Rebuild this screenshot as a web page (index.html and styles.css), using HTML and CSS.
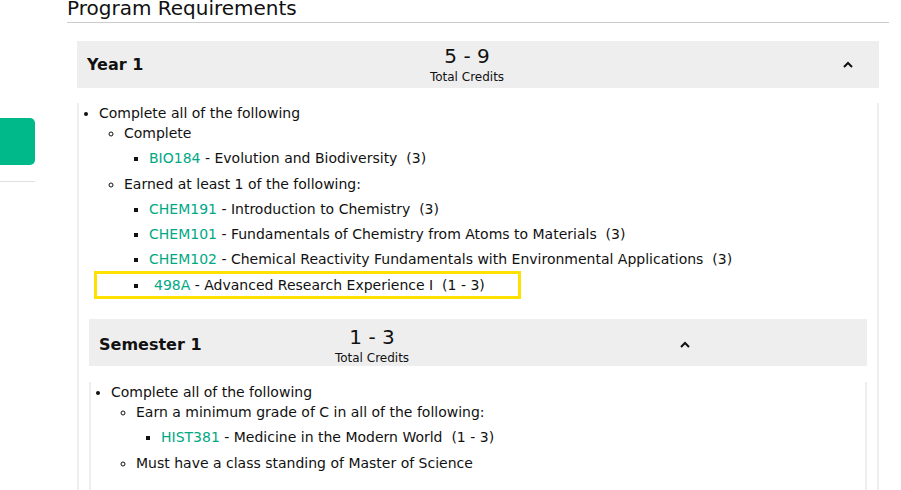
FILE: index.html
```html
<!DOCTYPE html>
<html lang="en">
  <head>
    <meta charset="UTF-8" />
    <meta name="viewport" content="width=device-width, initial-scale=1.0" />
    <title>Program Requirements</title>
    <link rel="stylesheet" href="styles.css">
  </head>
  <body>
    <div class="page">
      <aside class="sidebar">
        <div class="side-btn"></div>
        <div class="side-rule"></div>
      </aside>

      <main class="content">
        <h2 class="page-title">Program Requirements</h2>

        <div class="card card-year">
          <div class="card-header">
            <div class="card-title">Year 1</div>
            <div class="credits">
              <div class="credits-num">5 - 9</div>
              <div class="credits-label">Total Credits</div>
            </div>
            <div class="spacer"></div>
            <div class="toggle">
              <svg width="10" height="7" viewBox="0 0 10 7"><polyline points="1,6 5,2 9,6" fill="none" stroke="#111" stroke-width="2" /></svg>
            </div>
          </div>

          <div class="card-body">
            <ul class="req">
              <li>Complete all of the following
                <ul>
                  <li>Complete
                    <ul>
                      <li><a href="#">BIO184</a> - Evolution and Biodiversity &nbsp;(3)</li>
                    </ul>
                  </li>
                  <li>Earned at least 1 of the following:
                    <ul>
                      <li><a href="#">CHEM191</a> - Introduction to Chemistry &nbsp;(3)</li>
                      <li><a href="#">CHEM101</a> - Fundamentals of Chemistry from Atoms to Materials &nbsp;(3)</li>
                      <li><a href="#">CHEM102</a> - Chemical Reactivity Fundamentals with Environmental Applications &nbsp;(3)</li>
                      <li class="highlight"><a href="#" class="shift">498A</a> - Advanced Research Experience I &nbsp;(1 - 3)</li>
                    </ul>
                  </li>
                </ul>
              </li>
            </ul>

            <div class="card card-sem">
              <div class="card-header">
                <div class="card-title">Semester 1</div>
                <div class="credits">
                  <div class="credits-num">1 - 3</div>
                  <div class="credits-label">Total Credits</div>
                </div>
                <div class="spacer"></div>
                <div class="toggle">
                  <svg width="10" height="7" viewBox="0 0 10 7"><polyline points="1,6 5,2 9,6" fill="none" stroke="#111" stroke-width="2" /></svg>
                </div>
              </div>
              <div class="card-body">
                <ul class="req">
                  <li>Complete all of the following
                    <ul>
                      <li>Earn a minimum grade of C in all of the following:
                        <ul>
                          <li><a href="#">HIST381</a> - Medicine in the Modern World &nbsp;(1 - 3)</li>
                        </ul>
                      </li>
                      <li>Must have a class standing of Master of Science</li>
                    </ul>
                  </li>
                </ul>
              </div>
            </div>
          </div>
        </div>
      </main>
    </div>
  </body>
</html>
```

FILE: styles.css
```css
body {
  font-family: "DejaVu Sans", sans-serif;
  margin: 0;
  padding: 0;
  background-color: white;
  color: #111;
  overflow: hidden;
}

.page {
  display: flex;
  gap: 32px;
}

.sidebar {
  width: 35px;
  flex-shrink: 0;
  padding-top: 118px;
}

.side-btn {
  height: 47px;
  background-color: #00b98a;
  border-radius: 0 5px 5px 0;
}

.side-rule {
  height: 1px;
  margin-top: 16px;
  background-color: #e0e0e0;
}

.content {
  width: 822px;
}

.page-title {
  font-size: 20px;
  font-weight: normal;
  line-height: 26px;
  margin: -5px 0 0;
  padding-bottom: 1px;
  border-bottom: 1px solid #ccc;
  color: #111;
}

.card-year {
  margin: 18px 0 0 10px;
  width: 802px;
}

.card-sem {
  margin: 24px 10px 0;
}

.card-header {
  display: grid;
  align-items: center;
  height: 47px;
  background-color: #eee;
}

.card-year .card-header {
  grid-template-columns: 290px 200px 261px 40px;
}

.card-sem .card-header {
  grid-template-columns: 183px 200px 193px 40px;
  padding-top: 3px;
  height: 44px;
}

.card-title {
  font-weight: bold;
  font-size: 16px;
  padding-left: 10px;
}

.credits {
  text-align: center;
  align-self: start;
  padding-top: 4px;
}

.credits-num {
  font-size: 20px;
  line-height: 23px;
}

.credits-label {
  font-size: 12px;
  line-height: 18px;
}

.toggle {
  display: flex;
  justify-content: center;
}

.card-body {
  border: 2px solid #eee;
  border-top: none;
  padding-bottom: 12px;
}

.card-year .card-body {
  min-height: 420px;
}

.req {
  margin: 15px 0 0;
  padding-left: 20px;
  font-size: 14px;
  line-height: 20px;
  list-style: disc;
}

.card-sem .req {
  margin-top: 16px;
}

.req ul {
  margin: 0;
  padding-left: 25px;
  list-style: circle;
}

.req ul ul {
  list-style: square;
  margin-bottom: 6px;
}

.req ul ul li {
  margin-top: 5px;
}

.req a {
  color: #00a884;
  text-decoration: none;
}

/* yellow annotation box drawn round the last course */
.req .highlight {
  position: relative;
  width: fit-content;
  margin-top: 6px;
}

.req .highlight::after {
  content: "";
  position: absolute;
  top: -4px;
  bottom: -4px;
  left: -55px;
  right: -36px;
  border: 3px solid #ffe100;
}

.shift {
  margin-left: 5px;
}
```
